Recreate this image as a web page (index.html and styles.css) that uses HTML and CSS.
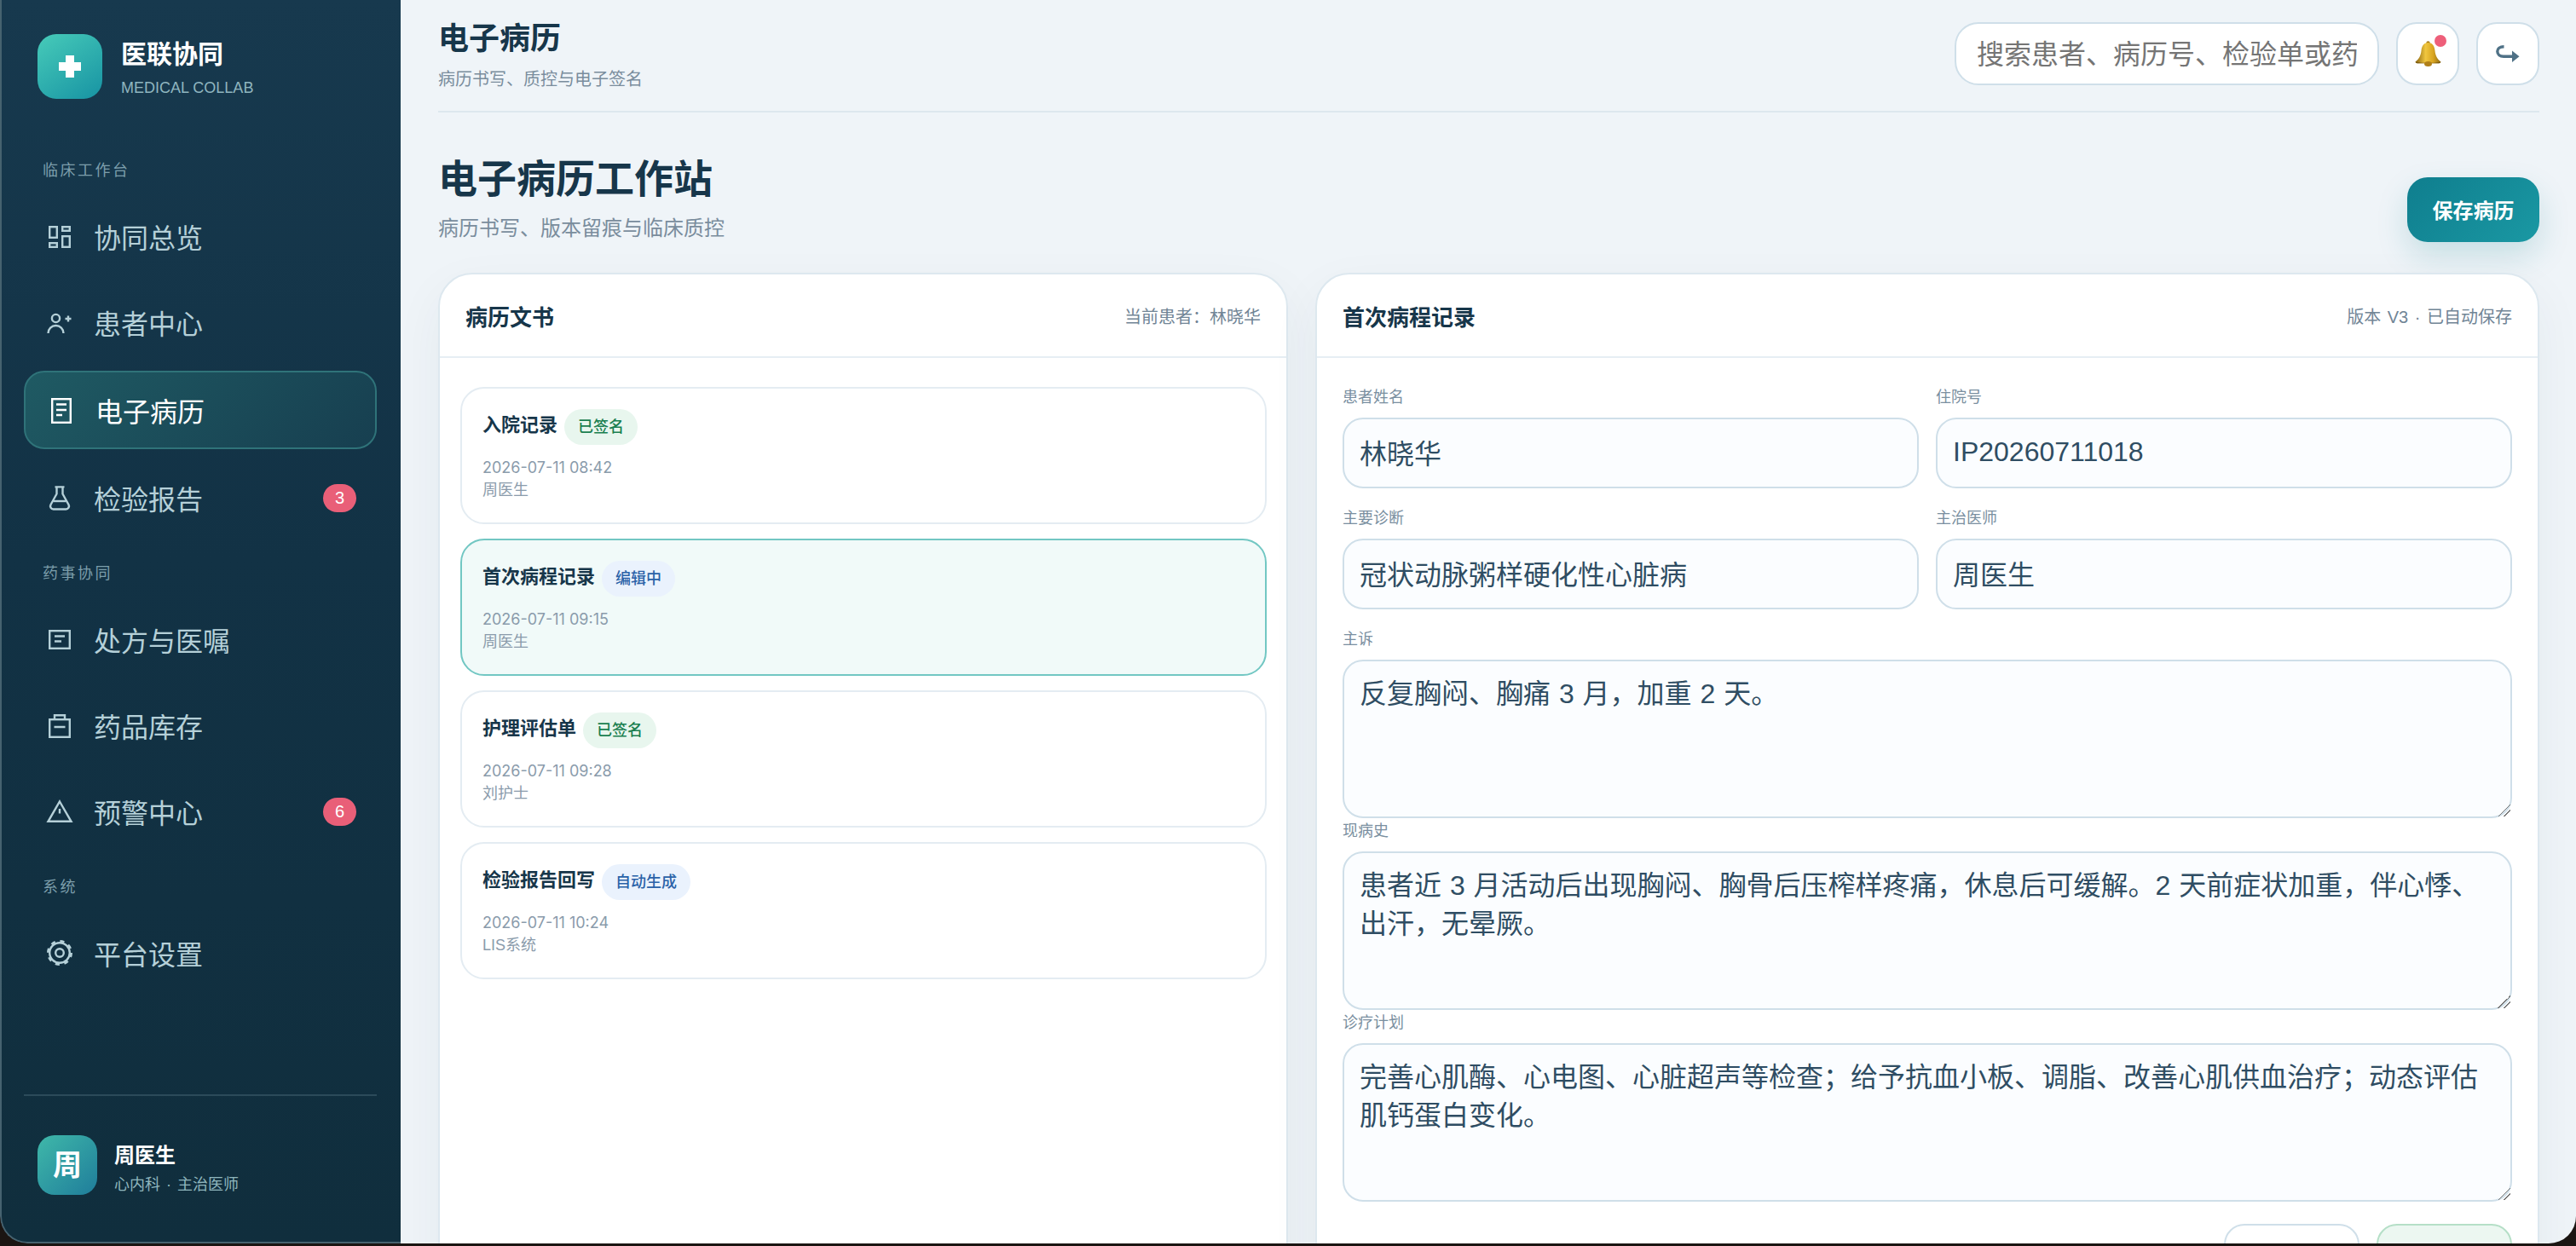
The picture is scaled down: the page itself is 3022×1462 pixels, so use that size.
FILE: index.html
```html
<!DOCTYPE html>
<html lang="zh-CN">
<head>
    <meta charset="UTF-8">
    <meta name="viewport" content="width=device-width, initial-scale=1.0">
    <title>医联协同 - 电子病历</title>
    <link rel="stylesheet" href="styles.css">
</head>
<body>
    <div class="app">
        <aside class="sidebar">
            <div class="brand">
                <div class="brand-logo">
                    <svg width="28" height="28" viewBox="0 0 28 28"><path d="M9 1h10v8h8v10h-8v8H9v-8H1V9h8z" fill="#fff"/></svg>
                </div>
                <div>
                    <div class="brand-name">医联协同</div>
                    <div class="brand-sub">MEDICAL COLLAB</div>
                </div>
            </div>

            <nav class="nav">
                <div class="nav-label">临床工作台</div>
                <a class="nav-item">
                    <svg class="nav-icon" viewBox="0 0 32 32"><rect x="4.2" y="5.2" width="8.6" height="12.6"/><rect x="4.2" y="24.2" width="8.6" height="4.6"/><rect x="19.2" y="5.2" width="8.6" height="4.6"/><rect x="19.2" y="16.2" width="8.6" height="12.6"/></svg>
                    <span>协同总览</span>
                </a>
                <a class="nav-item">
                    <svg class="nav-icon" viewBox="0 0 32 32"><circle cx="11.5" cy="11.5" r="4.6"/><path d="M2.5 29a9 9 0 0 1 18 0"/><path d="M26 8.5v7M22.5 12h7"/></svg>
                    <span>患者中心</span>
                </a>
                <a class="nav-item active">
                    <svg class="nav-icon" viewBox="0 0 32 32"><rect x="5.2" y="3.2" width="21.6" height="27.6"/><path d="M10 9.5h12M10 16h12M10 22h7"/></svg>
                    <span>电子病历</span>
                </a>
                <a class="nav-item">
                    <svg class="nav-icon" viewBox="0 0 32 32"><path d="M10.5 3.4h11M12.5 3.4v8.1L5.6 24a3.6 3.6 0 0 0 3.1 5.5h14.6a3.6 3.6 0 0 0 3.1-5.5l-6.9-12.500V3.4"/><path d="M8.500 20h15"/></svg>
                    <span>检验报告</span>
                    <span class="nav-badge">3</span>
                </a>

                <div class="nav-label">药事协同</div>
                <a class="nav-item">
                    <svg class="nav-icon" viewBox="0 0 32 32"><rect x="4.200" y="6.200" width="23.600" height="20.600"/><path d="M10 12.500h12M10 18.500h8"/></svg>
                    <span>处方与医嘱</span>
                </a>
                <a class="nav-item">
                    <svg class="nav-icon" viewBox="0 0 32 32"><rect x="4.200" y="9.200" width="23.600" height="20.600"/><path d="M10 9V4.200h12V9M9.500 18h13"/></svg>
                    <span>药品库存</span>
                </a>
                <a class="nav-item">
                    <svg class="nav-icon" viewBox="0 0 32 32"><path d="M16 4.500 29.500 27.800h-27zM16 13v5.500"/></svg>
                    <span>预警中心</span>
                    <span class="nav-badge">6</span>
                </a>

                <div class="nav-label">系统</div>
                <a class="nav-item">
                    <svg class="nav-icon" viewBox="0 0 32 32"><circle cx="16" cy="16" r="11.800"/><circle class="gear-teeth" cx="16" cy="16" r="13.500"/><circle cx="16" cy="16" r="4.800"/></svg>
                    <span>平台设置</span>
                </a>
            </nav>

            <div class="user">
                <div class="user-avatar">周</div>
                <div class="user-info">
                    <div class="user-name">周医生</div>
                    <div class="user-role">心内科 · 主治医师</div>
                </div>
            </div>
        </aside>

        <main class="main">
            <header class="topbar">
                <div>
                    <div class="topbar-title">电子病历</div>
                    <div class="topbar-sub">病历书写、质控与电子签名</div>
                </div>
                <div class="topbar-actions">
                    <input class="search" type="text" placeholder="搜索患者、病历号、检验单或药">
                    <button class="icon-btn">
                        <svg width="31" height="31" viewBox="0 0 31 31">
                            <defs>
                                <linearGradient id="bellGold" x1="0" y1="0" x2="1" y2="0">
                                    <stop offset="0" stop-color="#8a6410"/>
                                    <stop offset="0.4" stop-color="#f0c63f"/>
                                    <stop offset="0.7" stop-color="#d9a520"/>
                                    <stop offset="1" stop-color="#8f6a12"/>
                                </linearGradient>
                            </defs>
                            <circle cx="15.500" cy="2.500" r="2.200" fill="#a87c16"/>
                            <path d="M15.500 2C10.500 2 8 6 7.500 11.500 7 17 5 21 .8 24.200.2 25 1 26 3 26.200h25c2-.2 2.800-1.200 2.200-2C26 21 24 17 23.500 11.500 23 6 20.500 2 15.500 2z" fill="url(#bellGold)"/>
                            <path d="M.8 24.500c4 1.800 25.400 1.800 29.400 0-.2 1.400-1.600 1.700-3 1.800H3.800C2.400 26.200 1 25.900.8 24.500z" fill="#7a5a10"/>
                            <ellipse cx="15.500" cy="27" rx="4.500" ry="3" fill="#b07f18"/>
                        </svg>
                        <span class="icon-btn-dot"></span>
                    </button>
                    <button class="icon-btn">
                        <svg width="28" height="21" viewBox="0 0 28 21"><path d="M9.500 1.700C4.500 1.700 1.800 4 1.800 7.300c0 3.500 3 6 7.200 6H20" fill="none" stroke="#4f7186" stroke-width="3.400"/><path d="M19 6.500 27.500 13.300 19 20z" fill="#4f7186"/></svg>
                    </button>
                </div>
            </header>

            <section class="page-head">
                <div>
                    <h1>电子病历工作站</h1>
                    <p>病历书写、版本留痕与临床质控</p>
                </div>
                <button class="btn-primary">保存病历</button>
            </section>

            <div class="columns">
                <section class="card">
                    <div class="card-head">
                        <h2>病历文书</h2>
                        <span>当前患者：林晓华</span>
                    </div>
                    <div class="doc-list">
                        <div class="doc-item">
                            <div class="doc-title">入院记录<span class="tag tag-signed">已签名</span></div>
                            <div class="doc-meta">
                                <div class="doc-time">2026-07-11 08:42</div>
                                <div>周医生</div>
                            </div>
                        </div>
                        <div class="doc-item active">
                            <div class="doc-title">首次病程记录<span class="tag tag-info">编辑中</span></div>
                            <div class="doc-meta">
                                <div class="doc-time">2026-07-11 09:15</div>
                                <div>周医生</div>
                            </div>
                        </div>
                        <div class="doc-item">
                            <div class="doc-title">护理评估单<span class="tag tag-signed">已签名</span></div>
                            <div class="doc-meta">
                                <div class="doc-time">2026-07-11 09:28</div>
                                <div>刘护士</div>
                            </div>
                        </div>
                        <div class="doc-item">
                            <div class="doc-title">检验报告回写<span class="tag tag-info">自动生成</span></div>
                            <div class="doc-meta">
                                <div class="doc-time">2026-07-11 10:24</div>
                                <div>LIS系统</div>
                            </div>
                        </div>
                    </div>
                </section>

                <section class="card">
                    <div class="card-head">
                        <h2>首次病程记录</h2>
                        <span class="card-version">版本 V3 · 已自动保存</span>
                    </div>
                    <div class="form">
                        <div class="form-grid">
                            <div>
                                <label>患者姓名</label>
                                <input type="text" value="林晓华">
                            </div>
                            <div>
                                <label>住院号</label>
                                <input type="text" value="IP20260711018">
                            </div>
                            <div>
                                <label>主要诊断</label>
                                <input type="text" value="冠状动脉粥样硬化性心脏病">
                            </div>
                            <div>
                                <label>主治医师</label>
                                <input type="text" value="周医生">
                            </div>
                        </div>
                        <label>主诉</label>
                        <textarea>反复胸闷、胸痛 3 月，加重 2 天。</textarea>
                        <label>现病史</label>
                        <textarea>患者近 3 月活动后出现胸闷、胸骨后压榨样疼痛，休息后可缓解。2 天前症状加重，伴心悸、出汗，无晕厥。</textarea>
                        <label>诊疗计划</label>
                        <textarea>完善心肌酶、心电图、心脏超声等检查；给予抗血小板、调脂、改善心肌供血治疗；动态评估肌钙蛋白变化。</textarea>
                        <div class="form-actions">
                            <button class="btn-plain"></button>
                            <button class="btn-sign"></button>
                        </div>
                    </div>
                </section>
            </div>
        </main>
    </div>
</body>
</html>
```

FILE: styles.css
```css
* {
    box-sizing: border-box;
}
html, body {
    height: 100%;
}
body {
    margin: 0;
    overflow: hidden;
    background: #1b1512;
    font-family: "Liberation Sans", "Noto Sans CJK SC", sans-serif;
}
.app {
    display: flex;
    height: 1459px;
    overflow: hidden;
    border-radius: 0 0 32px 32px;
}

/* sidebar */
.sidebar {
    display: flex;
    flex-direction: column;
    flex: 0 0 470px;
    padding: 40px 28px 55px 26px;
    background: linear-gradient(180deg, #17394e 0%, #123245 45%, #102e3d 100%);
    border-left: 2px solid #46626f;
    border-bottom: 2px solid #46626f;
    border-bottom-left-radius: 32px;
}
.brand {
    display: flex;
    gap: 22px;
    margin-left: 16px;
}
.brand-logo {
    display: flex;
    align-items: center;
    justify-content: center;
    width: 76px;
    height: 76px;
    border-radius: 22px;
    background: linear-gradient(145deg, #47cbb9, #1793a3);
}
.brand-name {
    margin-top: 4px;
    font-size: 30px;
    line-height: 40px;
    font-weight: 700;
    color: #fff;
}
.brand-sub {
    margin-top: 6px;
    font-size: 18px;
    line-height: 26px;
    color: #8fb5bf;
}
.nav {
    margin-top: 39px;
}
.nav-label {
    margin: 32px 0 19px 22px;
    font-size: 18px;
    line-height: 27px;
    letter-spacing: 2.500px;
    color: #7c9eab;
}
.nav-item {
    display: flex;
    align-items: center;
    height: 88px;
    margin-bottom: 13px;
    padding: 0 24px 0 26px;
    border-radius: 24px;
    font-size: 32px;
    color: #b5d0d8;
}
.nav-item.active {
    height: 92px;
    border: 2px solid #2f7379;
    background: linear-gradient(135deg, #1f5a63, #173f50);
    color: #fff;
}
.nav-icon {
    flex: 0 0 32px;
    width: 32px;
    height: 32px;
    margin-right: 24px;
    fill: none;
    stroke: currentColor;
    stroke-width: 2.400;
}
.gear-teeth {
    stroke-width: 3;
    stroke-dasharray: 5 5.600;
}
.nav-badge {
    margin-left: auto;
    width: 39px;
    height: 33px;
    border-radius: 17px;
    background: #e95f78;
    font-size: 20px;
    line-height: 33px;
    text-align: center;
    color: #fff;
}
.user {
    display: flex;
    align-items: flex-start;
    gap: 20px;
    margin-top: auto;
    padding: 46px 0 0 16px;
    border-top: 2px solid #2c4b5a;
}
.user-avatar {
    width: 70px;
    height: 70px;
    border-radius: 20px;
    background: linear-gradient(135deg, #3fb8a9, #1f7d9b);
    font-size: 34px;
    font-weight: 700;
    line-height: 70px;
    text-align: center;
    color: #fff;
}
.user-info {
    padding-top: 8px;
}
.user-name {
    font-size: 24px;
    line-height: 32px;
    font-weight: 700;
    color: #fff;
}
.user-role {
    margin-top: 7px;
    font-size: 18px;
    line-height: 23px;
    word-spacing: 2px;
    color: #8fb6bd;
}

/* main area */
.main {
    flex: 1;
    min-width: 0;
    overflow: hidden;
    padding: 0 43px 0 44px;
    background: #eff4f8;
}
.topbar {
    display: flex;
    justify-content: space-between;
    padding-top: 24px;
    height: 132px;
    border-bottom: 2px solid #dde7ee;
}
.topbar-title {
    font-size: 36px;
    line-height: 44px;
    font-weight: 700;
    color: #17364a;
}
.topbar-sub {
    margin-top: 10px;
    font-size: 20px;
    line-height: 30px;
    color: #7a8d9d;
}
.topbar-actions {
    display: flex;
    gap: 20px;
    margin-top: 2px;
}
.search {
    width: 498px;
    height: 74px;
    padding: 2px 24px 0;
    border: 2px solid #cfdfe9;
    border-radius: 28px;
    background: #fff;
    font: inherit;
    font-size: 32px;
}
.icon-btn {
    position: relative;
    display: flex;
    align-items: center;
    justify-content: center;
    width: 74px;
    height: 74px;
    padding: 0;
    border: 2px solid #cfdfe9;
    border-radius: 24px;
    background: #fff;
}
.icon-btn-dot {
    position: absolute;
    top: 13px;
    right: 13px;
    width: 14px;
    height: 14px;
    border-radius: 50%;
    background: #ee5f7a;
}
.page-head {
    display: flex;
    justify-content: space-between;
    align-items: flex-end;
    margin-top: 48px;
}
.page-head h1 {
    margin: 0;
    font-size: 46px;
    line-height: 60px;
    font-weight: 700;
    color: #17364a;
}
.page-head p {
    margin: 10px 0 0;
    font-size: 24px;
    line-height: 36px;
    color: #7a8d9d;
}
.btn-primary {
    width: 155px;
    height: 76px;
    margin-bottom: 2px;
    padding-bottom: 2px;
    border: 0;
    border-radius: 24px;
    background: linear-gradient(135deg, #0f7e8e, #1a98a3);
    box-shadow: 0 16px 36px rgba(15, 125, 140, 0.18);
    font: inherit;
    font-size: 24px;
    font-weight: 700;
    color: #fff;
}
.columns {
    display: grid;
    grid-template-columns: 997px 1fr;
    gap: 32px;
    margin-top: 34px;
}

/* cards */
.card {
    border: 2px solid #dde8ef;
    border-radius: 40px;
    background: #fff;
    box-shadow: 0 20px 60px rgba(23, 54, 74, 0.05);
}
.card-head {
    display: flex;
    justify-content: space-between;
    align-items: center;
    height: 98px;
    padding: 0 30px;
    border-bottom: 2px solid #e6eef4;
    font-size: 20px;
    color: #718596;
}
.card-head h2 {
    margin: 0;
    font-size: 26px;
    font-weight: 700;
    color: #17364a;
}
.card-version {
    word-spacing: 2px;
}
.doc-list {
    display: flex;
    flex-direction: column;
    gap: 17px;
    padding: 34px 23px 34px 24px;
}
.doc-item {
    height: 161px;
    padding: 24px;
    border: 2px solid #e4ecf2;
    border-radius: 28px;
}
.doc-item.active {
    border-color: #72c7c3;
    background: #f1faf9;
}
.doc-title {
    display: flex;
    align-items: flex-start;
    gap: 8px;
    font-size: 22px;
    font-weight: 700;
    line-height: 38px;
    color: #17364a;
}
.tag {
    height: 42px;
    padding: 0 16px;
    border-radius: 21px;
    font-size: 18px;
    font-weight: 500;
    line-height: 42px;
}
.tag-signed {
    background: #e8f6ee;
    color: #1a7f50;
}
.tag-info {
    background: #eaf2fd;
    color: #2a62a8;
}
.doc-meta {
    margin-top: 13px;
    font-size: 18px;
    line-height: 27px;
    color: #8a9bab;
}
.doc-time {
    font-family: Inter, "Noto Sans CJK SC", sans-serif;
}

/* form */
.form {
    padding: 31px 30px;
}
.form-grid {
    display: grid;
    grid-template-columns: 1fr 1fr;
    gap: 20px;
}
.form label {
    display: block;
    margin-bottom: 10px;
    padding-top: 2px;
    font-size: 18px;
    line-height: 27px;
    color: #7a8fa0;
}
.form input,
.form textarea {
    display: block;
    width: 100%;
    border: 2px solid #cfdfe9;
    border-radius: 24px;
    background: #fbfdff;
    font: inherit;
    font-size: 32px;
    color: #2f4d63;
}
.form input {
    height: 83px;
    padding: 0 18px 3px;
}
.form textarea {
    height: 186px;
    padding: 16px 18px;
    line-height: 45px;
    word-spacing: 1px;
}
.form textarea::-webkit-resizer {
    background: linear-gradient(135deg, transparent 50%, #777 50%, #777 56%, transparent 56%, transparent 72%, #777 72%, #777 78%, transparent 78%);
}
.form-grid + label {
    margin-top: 20px;
}
.form-actions {
    display: flex;
    justify-content: flex-end;
    gap: 20px;
    margin-top: 26px;
}
.btn-plain,
.btn-sign {
    width: 159px;
    height: 76px;
    border-radius: 24px;
}
.btn-plain {
    border: 2px solid #cfdfe9;
    background: #fff;
}
.btn-sign {
    border: 2px solid #b5dfc7;
    background: #ecf7f1;
}
```
